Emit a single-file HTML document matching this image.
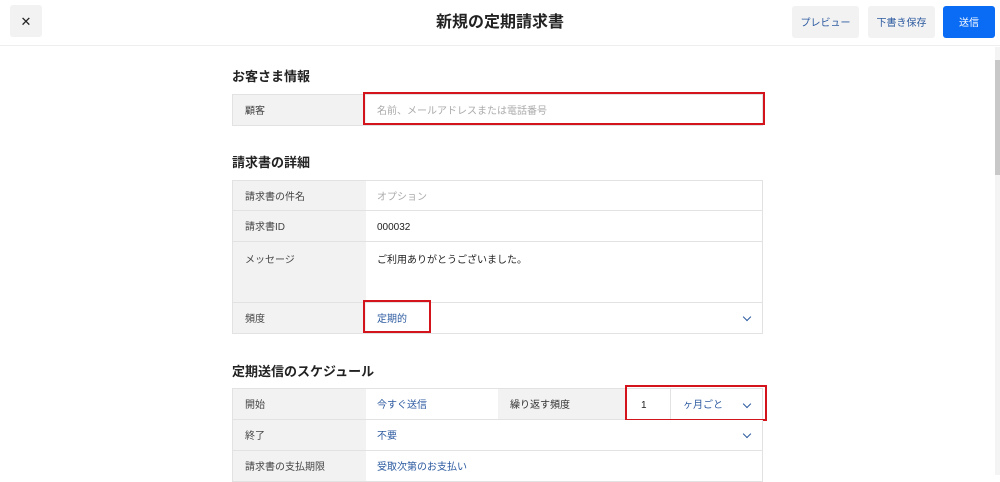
<!DOCTYPE html><html><head><meta charset="utf-8"><style>
*{box-sizing:border-box;margin:0;padding:0}
body{width:1000px;height:475px;overflow:hidden;background:#fff;font-family:"Liberation Sans","Noto Sans CJK JP",sans-serif;color:#333;position:relative;font-size:10px;line-height:1}
.a{position:absolute}
.hdr{left:0;top:0;width:1000px;height:46px;border-bottom:1px solid #eee}
.btn{background:#f2f2f2;border-radius:3px;display:flex;align-items:center;justify-content:center;font-size:10px;color:#2c5aa0;top:6px;height:32px;padding-top:4px}
h2{position:absolute;font-size:13px;font-weight:bold;color:#222;line-height:1}
.row{position:absolute;left:232px;width:531px;border:1px solid #e2e2e2;border-top:none;background:#fff}
.lab{position:absolute;left:0;top:0;bottom:0;width:133px;background:#f2f2f2;padding-left:12px;padding-top:4px;font-size:10px;color:#444;display:flex;align-items:center}
.val{position:absolute;left:144px;top:0;bottom:0;font-size:10px;display:flex;align-items:center;padding-top:4px}
.blue{color:#2c5aa0}
.chev{position:absolute;width:6px;height:6px;border-right:1.5px solid #2c5aa0;border-bottom:1.5px solid #2c5aa0;transform:rotate(45deg)}
.red{position:absolute;border:2px solid #d4141c}
</style></head><body>
<div class="a hdr"></div>
<div class="a" style="left:10px;top:5px;width:32px;height:32px;background:#f2f2f2;border-radius:3px;display:flex;align-items:center;justify-content:center;font-size:13px;color:#222">✕</div>
<div class="a" style="left:0;width:1000px;top:15px;text-align:center;font-size:16px;font-weight:bold;color:#222">新規の定期請求書</div>
<div class="a btn" style="left:792px;width:67px">プレビュー</div>
<div class="a btn" style="left:868px;width:67px">下書き保存</div>
<div class="a btn" style="left:943px;width:52px;background:#0a6cf5;color:#fff">送信</div>
<div class="a" style="left:995px;top:47px;width:5px;height:428px;background:#f4f4f4"></div>
<div class="a" style="left:995px;top:60px;width:5px;height:115px;background:#c8c8c8"></div>

<h2 style="left:232px;top:70px">お客さま情報</h2>
<div class="row" style="top:94px;height:32px;border-top:1px solid #e2e2e2"><div class="lab">顧客</div><div class="val" style="color:#aaa">名前、メールアドレスまたは電話番号</div></div>
<div class="red" style="left:363px;top:92px;width:402px;height:33px"></div>

<h2 style="left:232px;top:156px">請求書の詳細</h2>
<div class="row" style="top:180px;height:31px;border-top:1px solid #e2e2e2"><div class="lab">請求書の件名</div><div class="val" style="color:#aaa">オプション</div></div>
<div class="row" style="top:211px;height:31px"><div class="lab">請求書ID</div><div class="val" style="color:#222">000032</div></div>
<div class="row" style="top:242px;height:61px"><div class="lab" style="align-items:flex-start;padding-top:14px">メッセージ</div><div class="val" style="align-items:flex-start;padding-top:14px;color:#222">ご利用ありがとうございました。</div></div>
<div class="row" style="top:303px;height:31px"><div class="lab">頻度</div><div class="val blue">定期的</div><div class="chev" style="left:511px;top:11px"></div></div>
<div class="red" style="left:363px;top:300px;width:68px;height:33px"></div>

<h2 style="left:232px;top:365px">定期送信のスケジュール</h2>
<div class="row" style="top:388px;height:32px;border-top:1px solid #e2e2e2"><div class="lab">開始</div><div class="val blue">今すぐ送信</div>
<div style="position:absolute;left:265px;top:0;bottom:0;width:128px;background:#f2f2f2;padding-left:12px;padding-top:4px;display:flex;align-items:center">繰り返す頻度</div>
<div class="val" style="left:408px;color:#222">1</div>
<div style="position:absolute;left:437px;top:0;bottom:0;border-left:1px solid #e2e2e2"></div>
<div class="val blue" style="left:450px">ヶ月ごと</div><div class="chev" style="left:511px;top:12px"></div></div>
<div class="red" style="left:625px;top:385px;width:142px;height:36px"></div>
<div class="row" style="top:420px;height:31px"><div class="lab">終了</div><div class="val blue">不要</div><div class="chev" style="left:511px;top:11px"></div></div>
<div class="row" style="top:451px;height:31px"><div class="lab">請求書の支払期限</div><div class="val blue">受取次第のお支払い</div></div>
</body></html>
